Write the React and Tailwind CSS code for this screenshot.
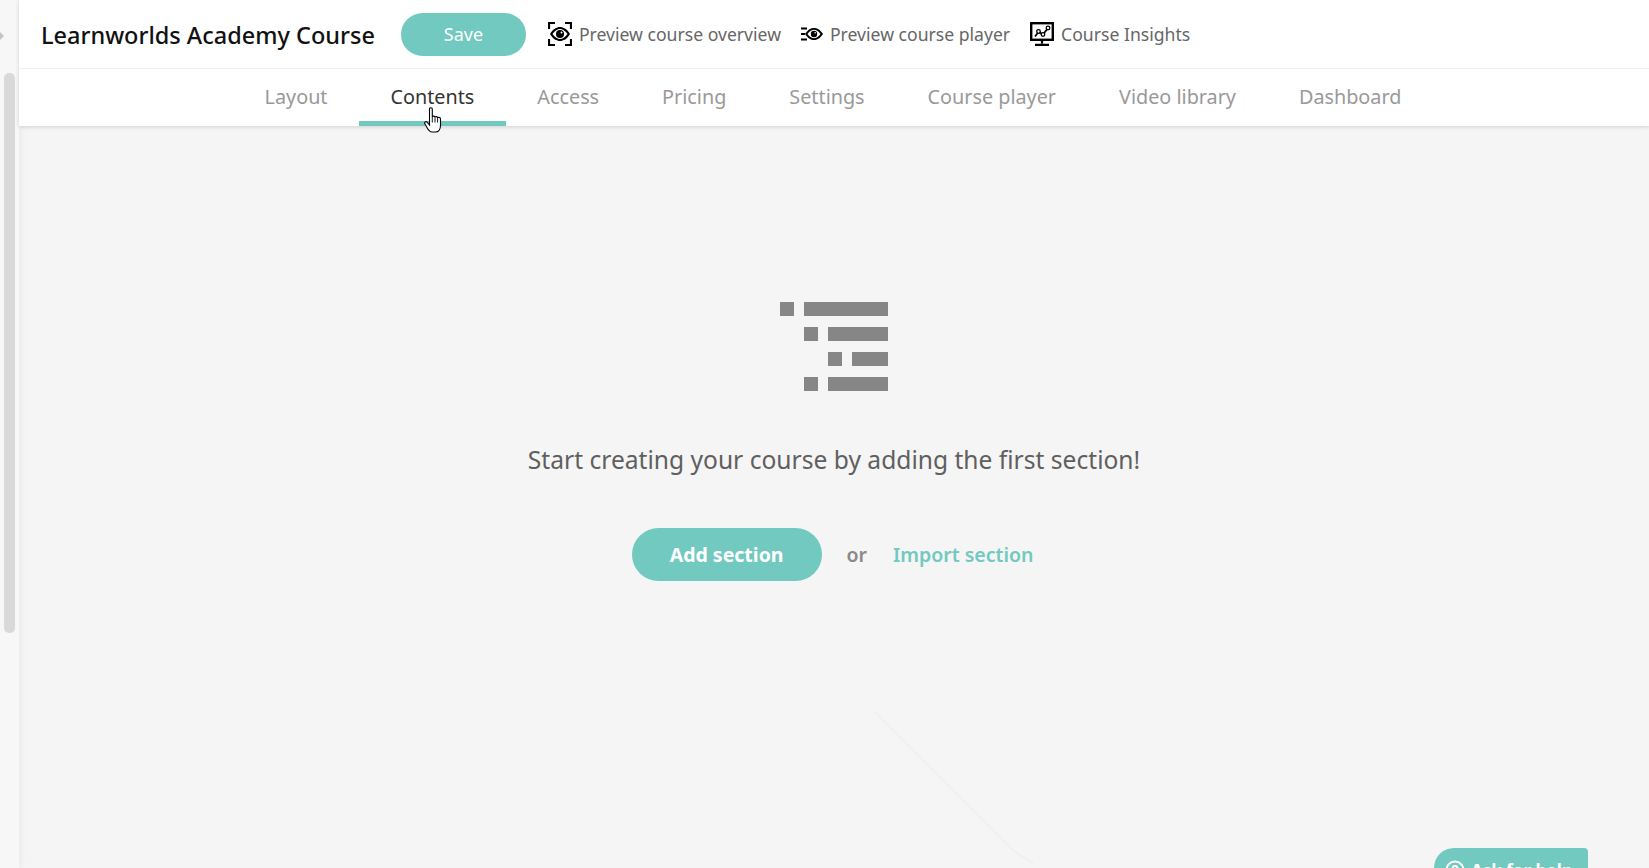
import React from 'react';

const tabs = ['Layout', 'Contents', 'Access', 'Pricing', 'Settings', 'Course player', 'Video library', 'Dashboard'];

function OverviewIcon() {
  return (
    <svg width="24" height="24" viewBox="0 0 24 24" fill="none">
      <path d="M1 7V1h6M17 1h6v6M23 17v6h-6M7 23H1v-6" stroke="#000" strokeWidth="2.200" />
      <path d="M2 12c3-5 6.500-7 10-7s7 2 10 7c-3 5-6.500 7-10 7s-7-2-10-7z" fill="#000" />
      <path d="M4.500 12c2.500-3.500 5-5 7.500-5s5 1.500 7.500 5c-2.500 3.500-5 5-7.500 5s-5-1.500-7.500-5z" fill="#fff" />
      <circle cx="12" cy="12" r="4" fill="#000" />
      <circle cx="13.500" cy="10.500" r="1" fill="#fff" />
    </svg>
  );
}

function PlayerIcon() {
  return (
    <svg width="22" height="14" viewBox="0 0 22 14" fill="none">
      <path d="M0 1.500h6M0 7h4M0 12.500h6" stroke="#000" strokeWidth="2" />
      <path d="M4 7c3-4.500 6-6 9-6s6 1.500 9 6c-3 4.500-6 6-9 6s-6-1.500-9-6z" fill="#000" />
      <path d="M6.500 7c2.200-3 4.500-4.300 6.500-4.300s4.300 1.300 6.500 4.300c-2.200 3-4.500 4.300-6.500 4.300S8.700 10 6.500 7z" fill="#fff" />
      <circle cx="13" cy="7" r="3.200" fill="#000" />
      <circle cx="14.200" cy="5.800" r="0.800" fill="#fff" />
    </svg>
  );
}

function InsightsIcon() {
  return (
    <svg width="24" height="24" viewBox="0 0 24 24" fill="none">
      <rect x="1.200" y="1.200" width="21.600" height="16.600" stroke="#000" strokeWidth="2.400" />
      <path d="M5 14.500l3.500-4.500 4.500 2.500 5-6.500" stroke="#000" strokeWidth="1.800" />
      <circle cx="8.500" cy="9.500" r="1.800" fill="#fff" stroke="#000" strokeWidth="1.300" />
      <circle cx="13" cy="12.500" r="1.800" fill="#fff" stroke="#000" strokeWidth="1.300" />
      <circle cx="18" cy="6" r="1.800" fill="#fff" stroke="#000" strokeWidth="1.300" />
      <path d="M12 18v3.500M5 22.800h14" stroke="#000" strokeWidth="2.200" />
    </svg>
  );
}

function SectionsIcon() {
  return (
    <svg width="108" height="89" viewBox="0 0 108 89" fill="#868686">
      <rect x="0" y="0" width="14" height="14" />
      <rect x="24" y="0" width="84" height="14" />
      <rect x="24" y="25" width="14" height="14" />
      <rect x="48" y="25" width="60" height="14" />
      <rect x="48" y="50" width="14" height="14" />
      <rect x="72" y="50" width="36" height="14" />
      <rect x="24" y="75" width="14" height="14" />
      <rect x="48" y="75" width="60" height="14" />
    </svg>
  );
}

function HandCursor() {
  return (
    <svg width="18" height="26" viewBox="0 0 18 26">
      <path
        d="M5.500 2c0-1.700 2.800-1.700 2.800 0v8c0-1.200 2.700-1.200 2.700 0.500 0-1.200 2.600-1.200 2.600 0.500 0-1 2.900-1 2.900 1v6.500c0 3.500-1.800 6.500-5 6.500H8c-2.200 0-3.300-1.500-4.300-3.200L1 17c-1.200-1.700 1.100-3.300 2.300-1.700l2.200 2.700z"
        fill="#fff"
        stroke="#000"
        strokeWidth="1.100"
      />
      <path d="M8.300 10v5.500M11 10.500v5M13.600 11v4.500" stroke="#000" strokeWidth="0.900" />
    </svg>
  );
}

function HeaderLink({ icon, label }) {
  return (
    <a className="flex items-center gap-[7px] pt-[1px] text-[17.6px] text-[#666666]">
      {icon}
      <span>{label}</span>
    </a>
  );
}

export default function App() {
  return (
    <div className="relative flex h-screen w-full overflow-hidden bg-[#f5f5f5] font-['Noto_Sans',sans-serif]">
      {/* left edge with the scrollbar */}
      <div className="w-[19px] shrink-0 bg-[#f7f7f7] pl-[4px] pt-[73px] shadow-[2px_0_6px_rgba(0,0,0,0.05)]">
        <div className="h-[560px] w-[11px] rounded-[5px] bg-[#d9d9d9]" />
      </div>
      <svg className="absolute top-[32px] left-0" width="4" height="8" viewBox="0 0 4 8" fill="#c4c4c4">
        <path d="M0 0l4 4-4 4z" />
      </svg>

      <div className="flex min-w-0 flex-1 flex-col">
        <header className="bg-white shadow-[0_1px_4px_rgba(0,0,0,0.15)]">
          <div className="flex h-[69px] items-center border-b border-[#efefef] pl-[22px]">
            <h1 className="mt-[3px] mr-[26px] text-[23.5px] font-medium whitespace-nowrap text-[#111111]">Learnworlds Academy Course</h1>
            <button className="mr-[22px] h-[43px] w-[125px] rounded-full bg-[#72c9bf] text-[18px] text-white">Save</button>
            <div className="flex items-center gap-[20px]">
              <HeaderLink icon={<OverviewIcon />} label="Preview course overview" />
              <HeaderLink icon={<PlayerIcon />} label="Preview course player" />
              <HeaderLink icon={<InsightsIcon />} label="Course Insights" />
            </div>
          </div>
          <nav className="flex h-[57px] justify-center pr-[2px]">
            {tabs.map((tab) => (
              <a
                key={tab}
                className={
                  tab === 'Contents'
                    ? 'relative flex items-center border-b-[5px] border-[#72c9bf] px-[31.5px] pt-[3px] text-[19.8px] text-[#333333]'
                    : 'flex items-center border-b-[5px] border-transparent px-[31.5px] pt-[3px] text-[19.8px] text-[#999999]'
                }
              >
                {tab}
                {tab === 'Contents' && (
                  <span className="absolute top-[38px] left-[65px]">
                    <HandCursor />
                  </span>
                )}
              </a>
            ))}
          </nav>
        </header>

        <main className="flex flex-1 flex-col items-center pt-[176px]">
          <SectionsIcon />
          <p className="mt-[51px] text-[24.6px] whitespace-nowrap text-[#5f5f5f]">Start creating your course by adding the first section!</p>
          <div className="mt-[49px] flex items-center pr-[3px]">
            <button className="h-[53px] w-[190px] rounded-full bg-[#72c9bf] text-[19.5px] font-bold text-white">Add section</button>
            <span className="ml-[25px] text-[19.5px] font-semibold text-[#8a8a8a]">or</span>
            <a className="ml-[26px] text-[19.5px] font-semibold text-[#72c9bf]">Import section</a>
          </div>
        </main>
      </div>

      {/* faint diagonal trace in the background */}
      <svg className="absolute top-[708px] left-[870px]" width="170" height="160" viewBox="0 0 170 160" fill="none">
        <path d="M5 4L143 142Q150 148 163 155" stroke="#eeeeee" strokeWidth="1.500" />
      </svg>

      {/* help widget, cut off by the bottom of the window */}
      <div className="absolute top-[848px] left-[1434px] flex h-[44px] w-[154px] items-start gap-[6px] rounded-tl-[20px] rounded-tr-[4px] bg-[#72c9bf] pt-[10px] pl-[11px] text-[17px] font-bold whitespace-nowrap text-white">
        <svg className="mt-[2px]" width="20" height="20" viewBox="0 0 20 20" fill="none" stroke="#fff" strokeWidth="2">
          <circle cx="10" cy="10" r="8.500" />
          <path d="M7.500 8a2.500 2.500 0 1 1 2.500 3v1.500" />
        </svg>
        <span>Ask for help</span>
      </div>
    </div>
  );
}
